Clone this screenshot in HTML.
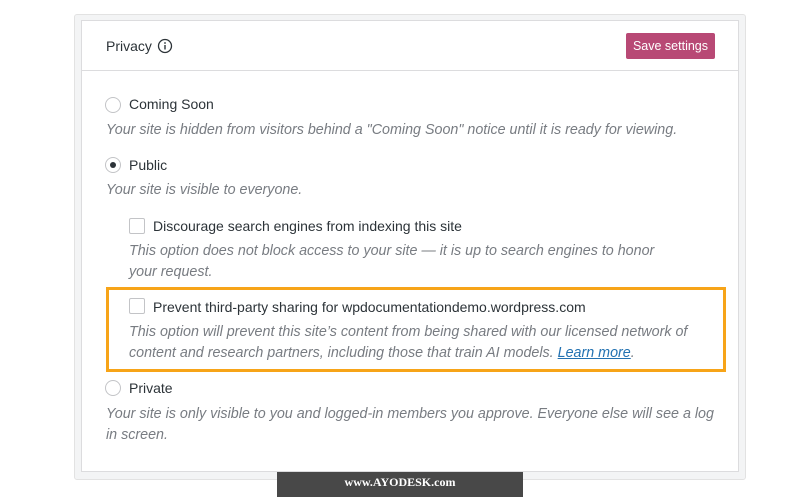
<!DOCTYPE html>
<html><head><style>
body{margin:0;width:800px;height:497px;background:#fff;font-family:"Liberation Sans",sans-serif;position:relative;overflow:hidden}
.outer{position:absolute;left:74px;top:14px;width:672px;height:466px;background:#f3f4f5;border-radius:3px;border:1px solid #e2e2e2;box-sizing:border-box}
.card{position:absolute;left:81px;top:20px;width:658px;height:452px;background:#fff;border:1px solid #dcdcde;box-sizing:border-box}
.hdr{position:absolute;left:81px;top:70px;width:658px;height:1px;background:#dcdcde}
.t{position:absolute;font-size:14px;color:#2c3338;white-space:nowrap}
.d{position:absolute;font-size:14.3px;color:#787c82;font-style:italic;white-space:nowrap}
.radio{position:absolute;width:16px;height:16px;border:1px solid #c3c4c7;border-radius:50%;box-sizing:border-box;background:#fff}
.cb{position:absolute;width:16px;height:16px;border:1px solid #c3c4c7;border-radius:2px;box-sizing:border-box;background:#fff}
.btn{position:absolute;left:626px;top:33px;width:89px;height:26px;background:#b23a6a;opacity:.92;border-radius:2px;color:#fff;font-size:12.5px;line-height:26px;text-align:center}
.yb{position:absolute;left:106px;top:287px;width:620px;height:85px;border:3px solid #f7a418;box-sizing:border-box}
.wm{position:absolute;left:277px;top:472px;width:246px;height:25px;background:#484848;color:#fff;font-family:"Liberation Serif",serif;font-weight:bold;font-size:12px;text-align:center;line-height:20px}
</style></head><body>
<div class="outer"></div>
<div class="card"></div>
<div class="hdr"></div>
<div class="t" style="left:106px;top:38px">Privacy</div>
<svg style="position:absolute;left:157px;top:38px" width="16" height="16" viewBox="0 0 16 16"><circle cx="8" cy="8" r="6.5" fill="none" stroke="#2c3338" stroke-width="1.3"/><rect x="7.3" y="7" width="1.4" height="4.5" fill="#2c3338"/><circle cx="8" cy="5" r=".9" fill="#2c3338"/></svg>
<div class="btn">Save settings</div>

<div class="radio" style="left:105px;top:97px"></div>
<div class="t" style="left:129px;top:96px">Coming Soon</div>
<div class="d" style="left:106px;top:122px">Your site is hidden from visitors behind a "Coming Soon" notice until it is ready for viewing.</div>

<div class="radio" style="left:105px;top:157px"><div style="position:absolute;left:4px;top:4px;width:6px;height:6px;border-radius:50%;background:#2c3338"></div></div>
<div class="t" style="left:129px;top:157px">Public</div>
<div class="d" style="left:106px;top:182px">Your site is visible to everyone.</div>

<div class="cb" style="left:129px;top:218px"></div>
<div class="t" style="left:153px;top:218px">Discourage search engines from indexing this site</div>
<div class="d" style="left:129px;top:243px">This option does not block access to your site — it is up to search engines to honor</div>
<div class="d" style="left:129px;top:264px">your request.</div>

<div class="yb"></div>
<div class="cb" style="left:129px;top:298px"></div>
<div class="t" style="left:153px;top:299px">Prevent third-party sharing for wpdocumentationdemo.wordpress.com</div>
<div class="d" style="left:129px;top:324px">This option will prevent this site’s content from being shared with our licensed network of</div>
<div class="d" style="left:129px;top:345px">content and research partners, including those that train AI models. <span style="color:#2271b1;text-decoration:underline">Learn more</span>.</div>

<div class="radio" style="left:105px;top:380px"></div>
<div class="t" style="left:129px;top:380px">Private</div>
<div class="d" style="left:106px;top:406px">Your site is only visible to you and logged-in members you approve. Everyone else will see a log</div>
<div class="d" style="left:106px;top:427px">in screen.</div>

<div class="wm">www.AYODESK.com</div>
</body></html>
